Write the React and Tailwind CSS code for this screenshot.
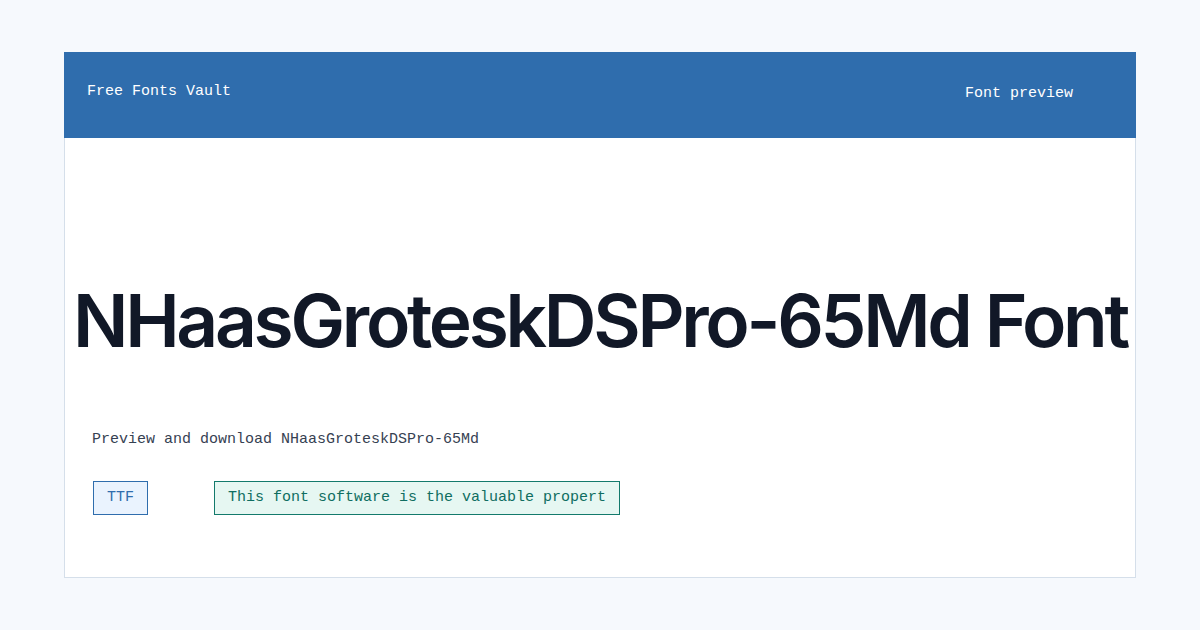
export default function App() {
  const mono = { fontFamily: '"Liberation Mono", "DejaVu Sans Mono", monospace' };
  return (
    <div className="w-[1200px] h-[630px] bg-[#f6f9fd] px-[64px] py-[52px] flex">
      <div className="w-[1072px] min-w-0 flex flex-col bg-white border border-[#d5dfea]">
        <header
          className="h-[86px] -mx-px -mt-px bg-[#2f6dad] flex items-start justify-between pl-[23px] pr-[63px] pt-[29px] text-white text-[15px] leading-[22px]"
          style={mono}
        >
          <div>Free Fonts Vault</div>
          <nav className="mt-[2px]">Font preview</nav>
        </header>
        <main className="flex-1 min-w-0 flex flex-col px-[27px]">
          <div className="mt-[146px] flex justify-center min-w-0">
            <h1
              className="shrink-0 whitespace-nowrap text-[73px] leading-none font-semibold tracking-[-0.045em] text-[#111827]"
              style={{ fontFamily: 'Inter, "Liberation Sans", sans-serif' }}
            >
              NHaasGroteskDSPro-65Md Font
            </h1>
          </div>
          <p className="mt-[72px] text-[15px] leading-[22px] text-[#364152]" style={mono}>
            Preview and download NHaasGroteskDSPro-65Md
          </p>
          <div className="mt-[30px] ml-px flex items-start gap-[66px] text-[15px] leading-[20px]" style={mono}>
            <span className="px-[13px] py-[6px] border border-[#2f6dad] bg-[#eaf3fe] text-[#2f6dad]">TTF</span>
            <span className="px-[13px] py-[6px] border border-[#137a6c] bg-[#e6f7f2] text-[#0f6e61]">
              This font software is the valuable propert
            </span>
          </div>
        </main>
      </div>
    </div>
  );
}
